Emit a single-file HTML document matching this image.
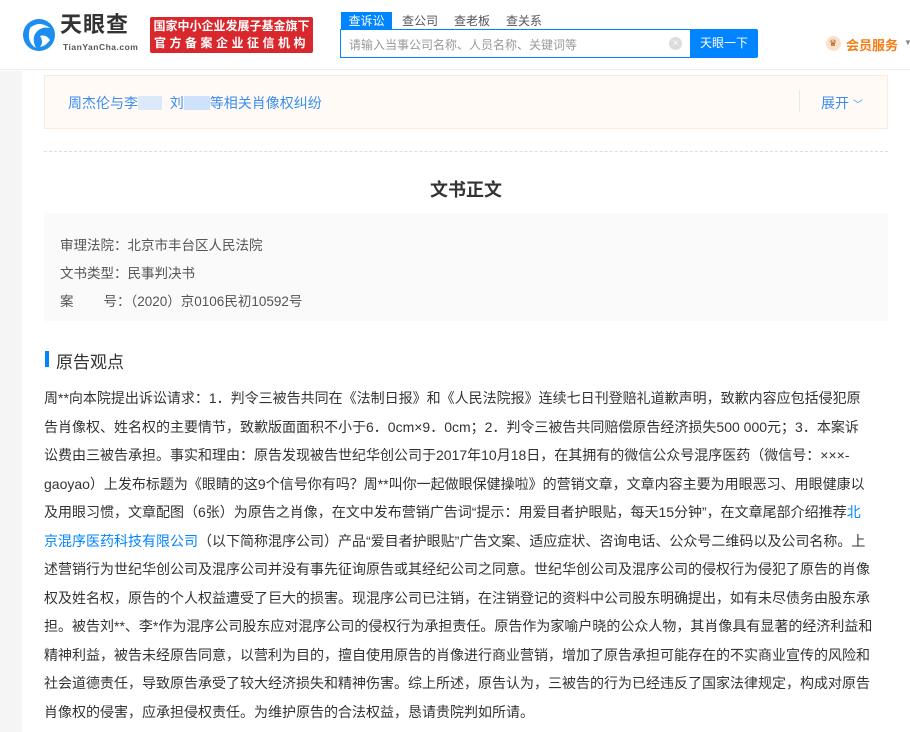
<!DOCTYPE html>
<html><head><meta charset="utf-8"><style>
*{margin:0;padding:0;box-sizing:border-box}
body{width:910px;height:732px;overflow:hidden;background:#fff;font-family:"Liberation Sans","Noto Sans CJK SC",sans-serif;color:#333;position:relative}
.hdr{position:absolute;left:0;top:0;width:910px;height:70px;border-bottom:1px solid #eee;background:#fff}
.strip{position:absolute;left:0;top:71px;width:22px;height:661px;background:#f5f5f5}
.abs{position:absolute}
.line{position:absolute;left:44px;font-size:14px;white-space:nowrap;color:#333}
.blue{color:#0084ff}
</style></head><body>
<div class="hdr">
  <svg class="abs" style="left:22px;top:16px" width="34" height="38" viewBox="0 0 34 38"><circle cx="17" cy="19" r="16" fill="#1d8ef0"/><path d="M8 12 Q17 4 28 12 Q18 10 13 18 Q10 24 14 32 Q4 26 8 12Z" fill="#fff"/><path d="M18 20 Q24 18 28 24 Q24 30 18 31 Q22 26 18 20Z" fill="#fff"/></svg>
  <div class="abs" style="left:60px;top:11px;font-size:22px;line-height:28px;font-weight:bold;color:#333;letter-spacing:1px">天眼查</div>
  <div class="abs" style="left:63px;top:42px;font-size:8.5px;line-height:10px;color:#555;letter-spacing:0.5px;font-weight:bold">TianYanCha.com</div>
  <div class="abs" style="left:150px;top:17px;width:163px;height:36px;background:#d9282d;border-radius:2px;color:#fff;font-size:12px;font-weight:bold;text-align:center;line-height:17px;padding-top:1px">国家中小企业发展子基金旗下<br><span style="letter-spacing:3.5px">官方备案企业征信机构</span></div>
  <div class="abs" style="left:341px;top:12px;width:51px;height:18px;background:#0084ff;color:#fff;font-size:12px;text-align:center;line-height:18px">查诉讼</div>
  <div class="abs" style="left:402px;top:12px;font-size:12px;color:#555;line-height:18px">查公司</div>
  <div class="abs" style="left:454px;top:12px;font-size:12px;color:#555;line-height:18px">查老板</div>
  <div class="abs" style="left:506px;top:12px;font-size:12px;color:#555;line-height:18px">查关系</div>
  <div class="abs" style="left:340px;top:29px;width:352px;height:29px;border:1px solid #0084ff;border-right:none;background:#fff"></div>
  <div class="abs" style="left:349px;top:36px;font-size:12px;color:#999">请输入当事公司名称、人员名称、关键词等</div>
  <div class="abs" style="left:669px;top:37px;width:13px;height:13px;border-radius:50%;background:#ddd;color:#fff;font-size:10px;text-align:center;line-height:13px">×</div>
  <div class="abs" style="left:690px;top:29px;width:68px;height:29px;background:#0084ff;border-radius:0 2px 2px 0;color:#fff;font-size:12px;text-align:center;line-height:29px">天眼一下</div>
  <div class="abs" style="left:826px;top:36px;width:15px;height:15px;border-radius:50%;background:#fbe0cc"></div>
  <div class="abs" style="left:829px;top:38px;font-size:9px;color:#b05a10">♛</div>
  <div class="abs" style="left:846px;top:35px;font-size:13px;font-weight:bold;color:#f27d13">会员服务</div>
  <div class="abs" style="left:904px;top:38px;font-size:8px;color:#888">▼</div>
</div>
<div class="strip"></div>
<div class="abs" style="left:44px;top:75px;width:844px;height:54px;background:#fffaf6;border:1px solid #fdebdc"></div>
<div class="abs" style="left:68px;top:93px;font-size:14px;color:#3a8ef0">周杰伦与李<span style="display:inline-block;width:24px;height:14px;background:#dbe9fb;vertical-align:-2px"></span> &nbsp;刘<span style="display:inline-block;width:26px;height:14px;background:#cfe2fb;vertical-align:-2px"></span>等相关肖像权纠纷</div>
<div class="abs" style="left:799px;top:90px;width:1px;height:22px;background:#f0e6dc"></div>
<div class="abs" style="left:821px;top:93px;font-size:14px;color:#3a8ef0">展开 <span style="font-size:10px">﹀</span></div>
<div class="abs" style="left:44px;top:151px;width:844px;border-top:1px dashed #ddd"></div>
<div class="abs" style="left:0;width:910px;top:176px;text-align:center;font-size:18px;font-weight:bold;color:#333;padding-left:22px">文书正文</div>
<div class="abs" style="left:44px;top:213px;width:844px;height:108px;background:#fafafa"></div>
<div class="abs" style="left:60px;top:232px;font-size:13.5px;color:#555;line-height:28px">审理法院：北京市丰台区人民法院<br>文书类型：民事判决书<br>案&nbsp;&nbsp;&nbsp;&nbsp;&nbsp;&nbsp;&nbsp;&nbsp;号：（2020）京0106民初10592号</div>
<div class="abs" style="left:45px;top:351px;width:4px;height:16px;background:#0084ff"></div>
<div class="abs" style="left:56px;top:348px;font-size:17px;color:#333">原告观点</div>
<div class="line" style="top:388px">周**向本院提出诉讼请求：1．判令三被告共同在《法制日报》和《人民法院报》连续七日刊登赔礼道歉声明，致歉内容应包括侵犯原</div>
<div class="line" style="top:417px">告肖像权、姓名权的主要情节，致歉版面面积不小于6．0cm×9．0cm；2．判令三被告共同赔偿原告经济损失500 000元；3．本案诉</div>
<div class="line" style="top:445px">讼费由三被告承担。事实和理由：原告发现被告世纪华创公司于2017年10月18日，在其拥有的微信公众号混序医药（微信号：×××-</div>
<div class="line" style="top:474px">gaoyao）上发布标题为《眼睛的这9个信号你有吗？周**叫你一起做眼保健操啦》的营销文章，文章内容主要为用眼恶习、用眼健康以</div>
<div class="line" style="top:502px">及用眼习惯，文章配图（6张）为原告之肖像，在文中发布营销广告词“提示：用爱目者护眼贴，每天15分钟”，在文章尾部介绍推荐<span class="blue">北</span></div>
<div class="line" style="top:531px"><span class="blue">京混序医药科技有限公司</span>（以下简称混序公司）产品“爱目者护眼贴”广告文案、适应症状、咨询电话、公众号二维码以及公司名称。上</div>
<div class="line" style="top:559px">述营销行为世纪华创公司及混序公司并没有事先征询原告或其经纪公司之同意。世纪华创公司及混序公司的侵权行为侵犯了原告的肖像</div>
<div class="line" style="top:588px">权及姓名权，原告的个人权益遭受了巨大的损害。现混序公司已注销，在注销登记的资料中公司股东明确提出，如有未尽债务由股东承</div>
<div class="line" style="top:616px">担。被告刘**、李*作为混序公司股东应对混序公司的侵权行为承担责任。原告作为家喻户晓的公众人物，其肖像具有显著的经济利益和</div>
<div class="line" style="top:645px">精神利益，被告未经原告同意，以营利为目的，擅自使用原告的肖像进行商业营销，增加了原告承担可能存在的不实商业宣传的风险和</div>
<div class="line" style="top:673px">社会道德责任，导致原告承受了较大经济损失和精神伤害。综上所述，原告认为，三被告的行为已经违反了国家法律规定，构成对原告</div>
<div class="line" style="top:702px">肖像权的侵害，应承担侵权责任。为维护原告的合法权益，恳请贵院判如所请。</div>
</body></html>
